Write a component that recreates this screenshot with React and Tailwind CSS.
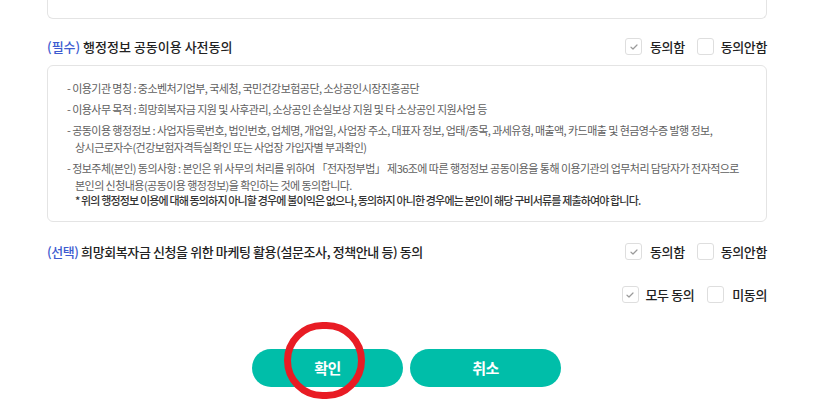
import React from "react";

function Check({ checked }) {
  return (
    <span className="w-[17px] h-[17px] rounded-[3px] border border-[#dedede] bg-white flex items-center justify-center shrink-0">
      {checked && (
        <svg width="8" height="6" viewBox="0 0 8 6" fill="none">
          <path d="M1 3.2 L3 5 L7 1" stroke="#9a9a9a" strokeWidth="1.2" strokeLinecap="round" strokeLinejoin="round" />
        </svg>
      )}
    </span>
  );
}

function AgreeRow({ a = "동의함", b = "동의안함", gapA = "gap-[8px]", gapMid = "ml-[12px]", gapB = "gap-[7px]" }) {
  return (
    <div className="flex items-center">
      <label className={`flex items-center ${gapA}`}>
        <Check checked />
        <span className="text-[13px] font-medium text-[#222] tracking-[-0.4px] leading-none">{a}</span>
      </label>
      <label className={`flex items-center ${gapB} ${gapMid}`}>
        <Check />
        <span className="text-[13px] font-medium text-[#222] tracking-[-0.4px] leading-none">{b}</span>
      </label>
    </div>
  );
}

export default function App() {
  return (
    <div className="relative w-[819px] h-[407px] bg-white overflow-hidden font-['Noto_Sans_CJK_KR','Noto_Sans',sans-serif]">
      <div className="ml-[47px] w-[720px]">
        <div className="h-[19px] border border-t-0 border-[#e4e4e4] rounded-b-[6px]" />

        <div className="mt-[19px] h-[17px] flex items-center justify-between">
          <h3 className="text-[13px] font-medium text-[#222] tracking-[0px] leading-none">
            <span className="text-[#3d5bd0]">(필수)</span> 행정정보 공동이용 사전동의
          </h3>
          <AgreeRow />
        </div>

        <div className="mt-[10px] h-[157px] border border-[#e4e4e4] rounded-[6px] pl-[19px] pr-[12px] pt-[14px] text-[11px] leading-[17px] tracking-[-0.55px] text-[#606060]">
          <p>- 이용기관 명칭 : 중소벤처기업부, 국세청, 국민건강보험공단, 소상공인시장진흥공단</p>
          <p className="mt-[4px]">- 이용사무 목적 : 희망회복자금 지원 및 사후관리, 소상공인 손실보상 지원 및 타 소상공인 지원사업 등</p>
          <p className="mt-[4px]">
            - 공동이용 행정정보 : 사업자등록번호, 법인번호, 업체명, 개업일, 사업장 주소, 대표자 정보, 업태/종목, 과세유형, 매출액, 카드매출 및 현금영수증 발행 정보,
            <br />
            <span className="pl-[8px]">상시근로자수(건강보험자격득실확인 또는 사업장 가입자별 부과확인)</span>
          </p>
          <p className="mt-[4px]">
            - 정보주체(본인) 동의사항 : 본인은 위 사무의 처리를 위하여 「전자정부법」 제36조에 따른 행정정보 공동이용을 통해 이용기관의 업무처리 담당자가 전자적으로
            <br />
            <span className="pl-[8px]">본인의 신청내용(공동이용 행정정보)을 확인하는 것에 동의합니다.</span>
          </p>
          <p className="pl-[8px] text-[#333] font-medium leading-[13px] tracking-[-0.85px]">
            * 위의 행정정보 이용에 대해 동의하지 아니할 경우에 불이익은 없으나, 동의하지 아니한 경우에는 본인이 해당 구비서류를 제출하여야 합니다.
          </p>
        </div>

        <div className="mt-[21px] h-[17px] flex items-center justify-between">
          <h3 className="text-[13px] font-medium text-[#222] tracking-[-0.4px] leading-none">
            <span className="text-[#3d5bd0]">(선택)</span> 희망회복자금 신청을 위한 마케팅 활용(설문조사, 정책안내 등) 동의
          </h3>
          <AgreeRow />
        </div>

        <div className="mt-[26px] h-[17px] flex items-center justify-end">
          <AgreeRow a="모두 동의" b="미동의" gapA="gap-[7px]" gapMid="ml-[13px]" gapB="gap-[8px]" />
        </div>
      </div>

      <div className="mt-[46px] flex justify-center gap-[7px] pr-[6px]">
        <div className="relative">
          <button className="w-[151px] h-[38px] rounded-full bg-[#00bea9] text-white text-[15px] font-bold tracking-[-0.5px]">확인</button>
          <div className="absolute left-[32px] top-[-27px] w-[81px] h-[77px] rounded-full border-[7px] border-[#e81c24]" />
        </div>
        <button className="w-[151px] h-[38px] rounded-full bg-[#00bea9] text-white text-[15px] font-bold tracking-[-0.5px]">취소</button>
      </div>
    </div>
  );
}
